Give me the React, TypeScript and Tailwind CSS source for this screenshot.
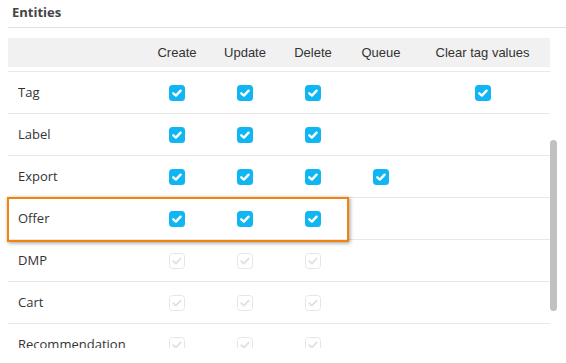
import React from "react";

type Row = { name: string; perms: boolean[]; disabled?: boolean; highlight?: boolean };

const rows: Row[] = [
  { name: "Tag", perms: [true, true, true, false, true] },
  { name: "Label", perms: [true, true, true, false, false] },
  { name: "Export", perms: [true, true, true, true, false] },
  { name: "Offer", perms: [true, true, true, false, false], highlight: true },
  { name: "DMP", perms: [true, true, true, false, false], disabled: true },
  { name: "Cart", perms: [true, true, true, false, false], disabled: true },
  { name: "Recommendation", perms: [true, true, true, false, false], disabled: true },
];

const columns = ["Create", "Update", "Delete", "Queue", "Clear tag values"];

function Check({ disabled }: { disabled?: boolean }): React.ReactElement {
  if (disabled) {
    return (
      <svg width="16" height="16" viewBox="0 0 16 16">
        <rect x="0.5" y="0.5" width="15" height="15" rx="3" fill="#fff" stroke="#e6e6e6" />
        <path d="M4.3 8.2 L6.9 10.6 L11.6 5.6" fill="none" stroke="#e2e2e2" strokeWidth="2" strokeLinecap="round" strokeLinejoin="round" />
      </svg>
    );
  }
  return (
    <svg width="16" height="16" viewBox="0 0 16 16">
      <rect x="0" y="0" width="16" height="16" rx="3.5" fill="#10b6f3" />
      <path d="M4.3 8.3 L6.9 10.6 L11.6 5.7" fill="none" stroke="#fff" strokeWidth="2.4" strokeLinecap="round" strokeLinejoin="round" />
    </svg>
  );
}

export default function App(): React.ReactElement {
  return (
    <div className="h-[363px] w-[566px] overflow-hidden bg-white">
      <div className="h-[27px] pl-3 pt-[3px] font-['Open_Sans',sans-serif] text-[13px] font-bold leading-[18px] text-[#444]">
        Entities
      </div>
      <div className="ml-2 h-px bg-[#e0e0e0]" />

      <div className="ml-2 mt-[10px] grid h-[29px] w-[542px] grid-cols-[135px_68px_68px_68px_68px_135px] items-center bg-[#f1f1f1] font-['Liberation_Sans',Arial,sans-serif] text-[13px] text-[#333]">
        <div />
        {columns.map((c) => (
          <div key={c} className="text-center">
            {c}
          </div>
        ))}
      </div>

      <div className="mt-[4px] flex h-[277px] overflow-hidden pl-2">
        <div className="w-[542px]">
          {rows.map((r) => (
            <div
              key={r.name}
              className="relative grid h-[42px] grid-cols-[135px_68px_68px_68px_68px_135px] items-center border-t border-[#e8e8e8] font-['Open_Sans',sans-serif] text-[13px] text-[#333]"
            >
              <div className="pl-[10px]">{r.name}</div>
              {r.perms.map((p, i) => (
                <div key={i} className="flex justify-center">
                  {p && <Check disabled={r.disabled} />}
                </div>
              ))}
              {r.highlight && (
                <div className="absolute left-[-1px] top-[-1px] z-10 h-[45px] w-[342px] border-2 border-[#f5820f] shadow-[1px_1px_4px_rgba(0,0,0,0.4)]" />
              )}
            </div>
          ))}
        </div>
        <div className="w-2">
          <div className="mt-[69px] h-[171px] w-[7px] rounded-full bg-[#c1c1c1]" />
        </div>
      </div>
    </div>
  );
}
